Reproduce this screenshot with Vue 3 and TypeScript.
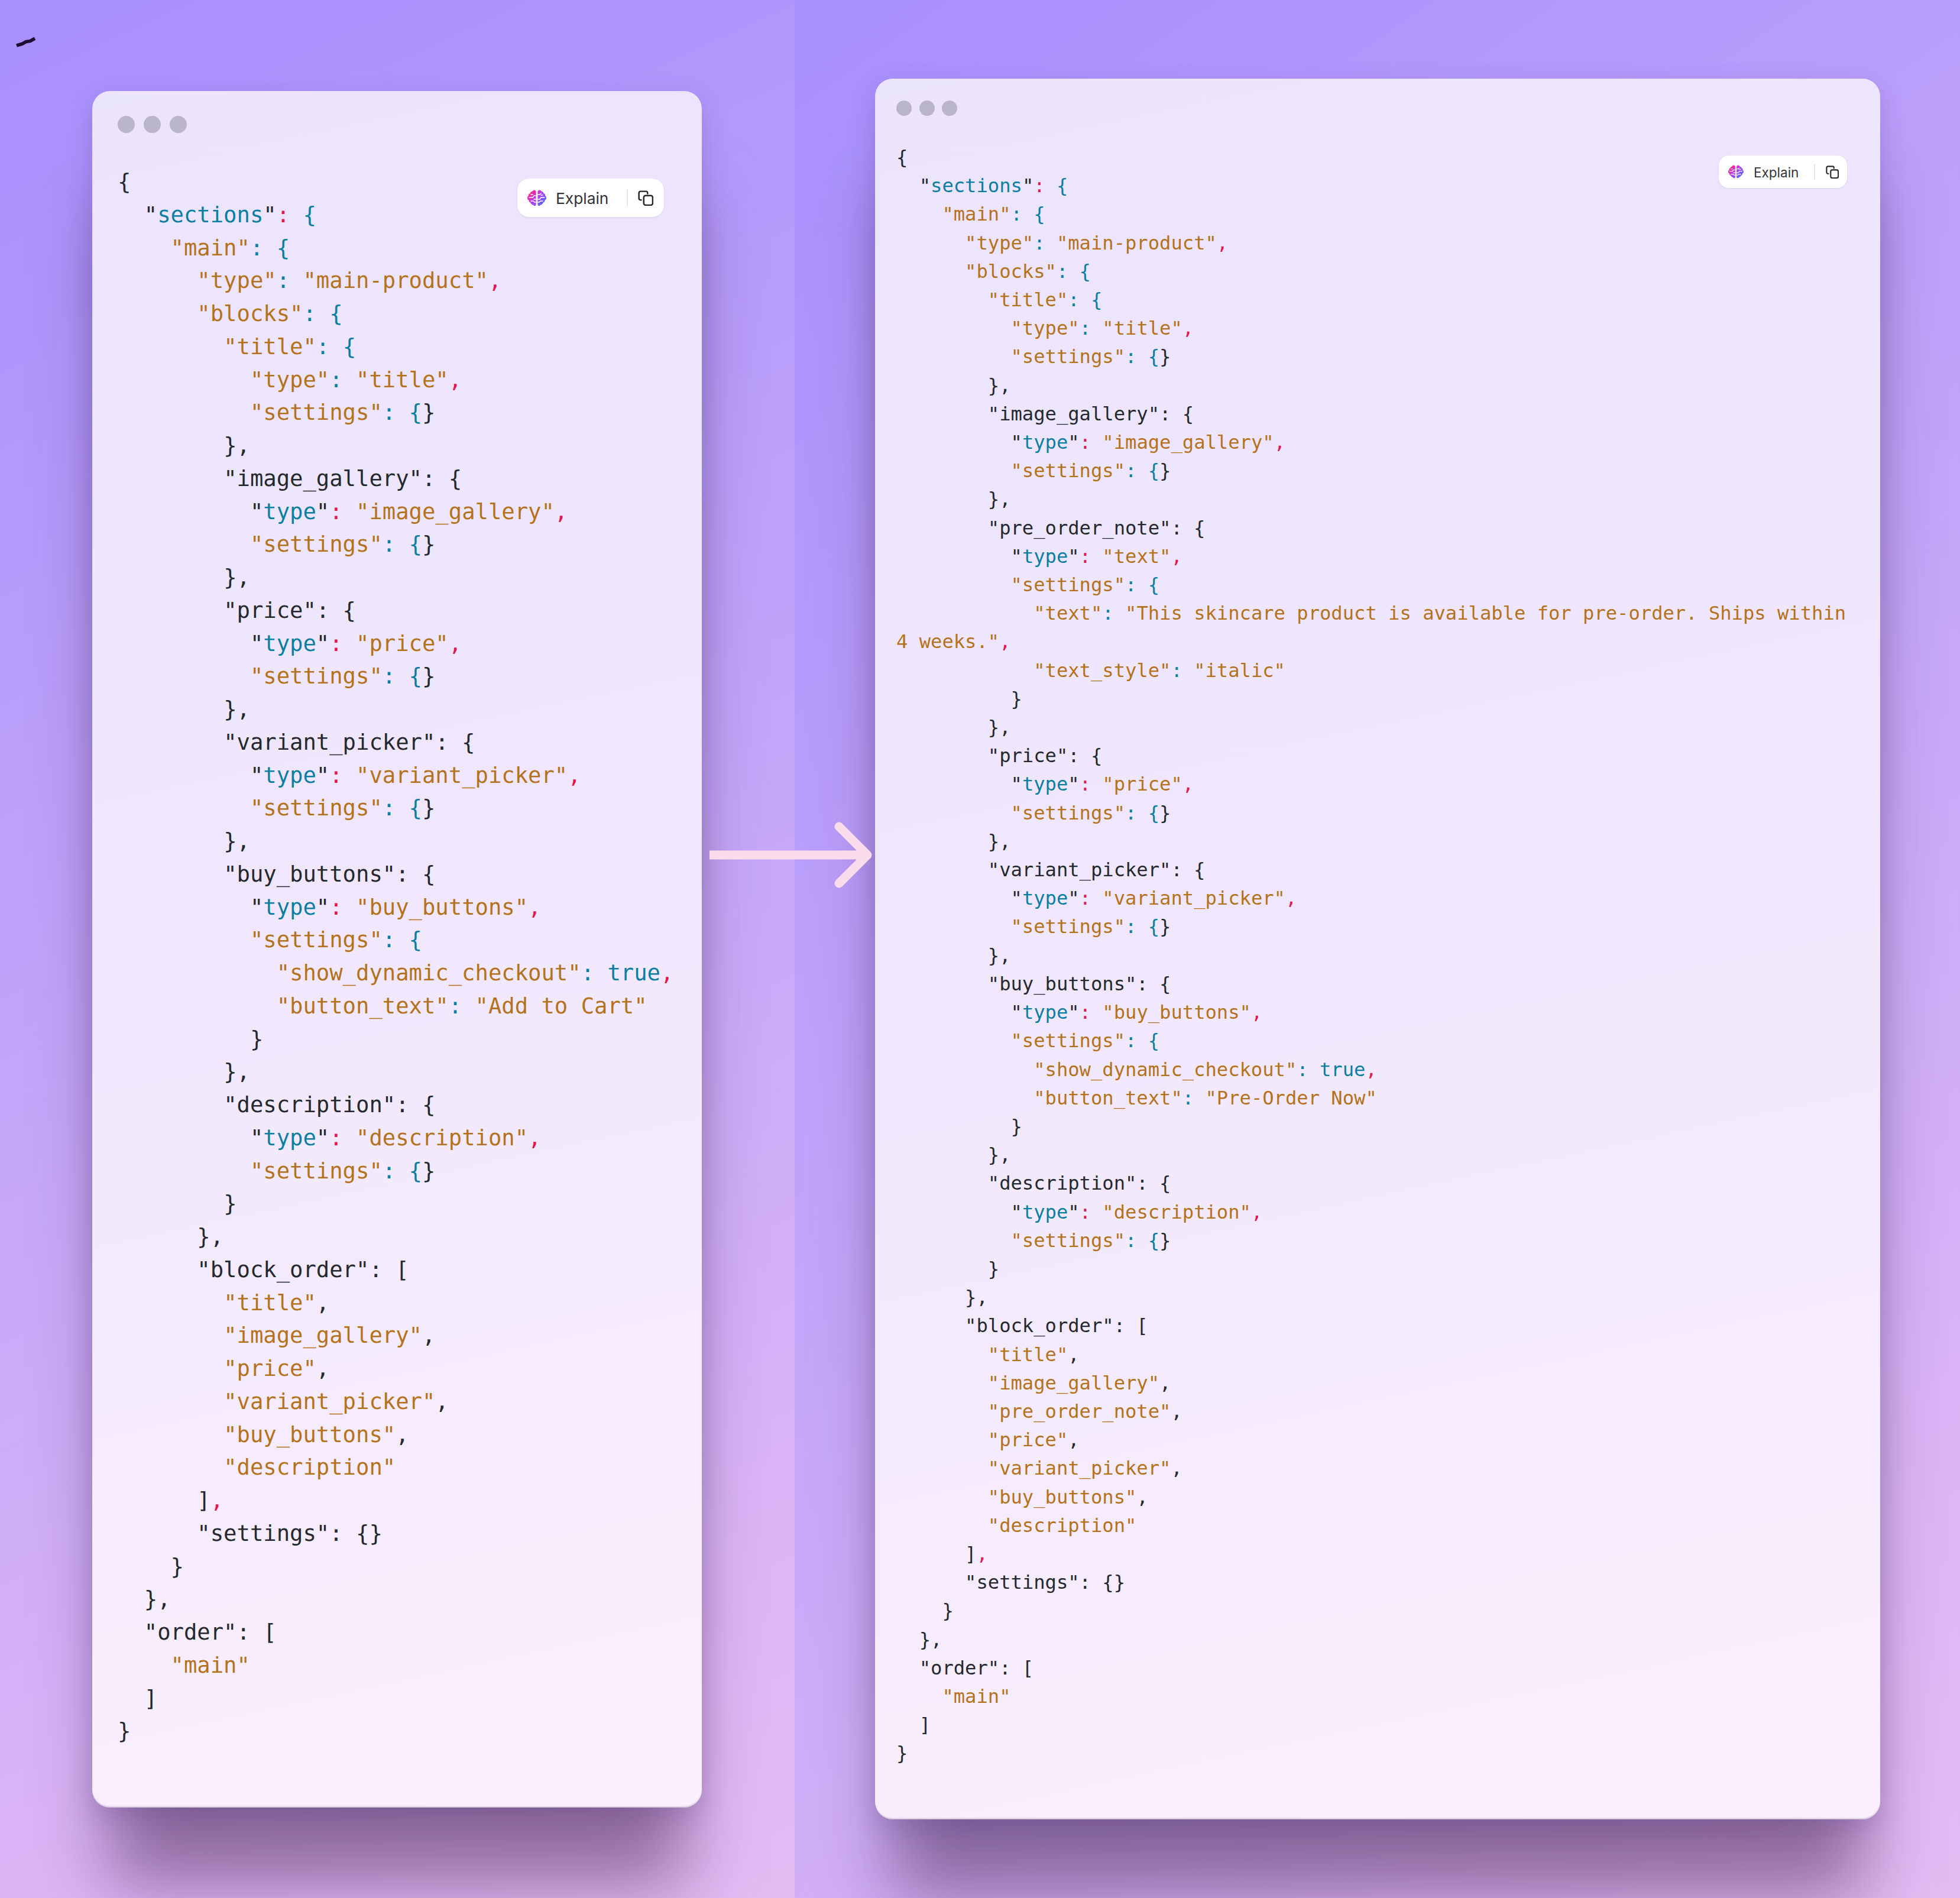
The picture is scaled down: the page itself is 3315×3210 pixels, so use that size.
<script setup lang="ts">
type Token = { c: string; t: string }

const sp = (n: number) => ' '.repeat(n)
const dk = (n: number, s: string) => `~d${sp(n)}${s}`
const keyOpen = (n: number, k: string) => `~d${sp(n)}~o"${k}"~t: {`
const typeOrange = (n: number, v: string) => `~d${sp(n)}~o"type"~t: ~o"${v}"~r,`
const typeTeal = (n: number, v: string) => `~d${sp(n)}"~ttype~d"~r:~d ~o"${v}"~r,`
const settingsEmpty = (n: number) => `~d${sp(n)}~o"settings"~t: {~d}`
const block = (k: string) => [dk(8, `"${k}": {`), typeTeal(10, k), settingsEmpty(10), dk(8, '},')]
const item = (v: string, comma = true) => `~d${sp(8)}~o"${v}"${comma ? '~d,' : ''}`

function buildDoc(withNote: boolean, buttonText: string): string[] {
  const note = withNote
    ? [
        dk(8, '"pre_order_note": {'),
        typeTeal(10, 'text'),
        keyOpen(10, 'settings'),
        `~d${sp(12)}~o"text"~t: ~o"This skincare product is available for pre-order. Ships within 4 weeks."~r,`,
        `~d${sp(12)}~o"text_style"~t: ~o"italic"`,
        dk(10, '}'),
        dk(8, '},')
      ]
    : []
  return [
    '~d{',
    `~d${sp(2)}"~tsections~d"~r:~t {`,
    keyOpen(4, 'main'),
    typeOrange(6, 'main-product'),
    keyOpen(6, 'blocks'),
    keyOpen(8, 'title'),
    typeOrange(10, 'title'),
    settingsEmpty(10),
    dk(8, '},'),
    ...block('image_gallery'),
    ...note,
    ...block('price'),
    ...block('variant_picker'),
    dk(8, '"buy_buttons": {'),
    typeTeal(10, 'buy_buttons'),
    keyOpen(10, 'settings'),
    `~d${sp(12)}~o"show_dynamic_checkout"~t: true~r,`,
    `~d${sp(12)}~o"button_text"~t: ~o"${buttonText}"`,
    dk(10, '}'),
    dk(8, '},'),
    dk(8, '"description": {'),
    typeTeal(10, 'description'),
    settingsEmpty(10),
    dk(8, '}'),
    dk(6, '},'),
    dk(6, '"block_order": ['),
    item('title'),
    item('image_gallery'),
    ...(withNote ? [item('pre_order_note')] : []),
    item('price'),
    item('variant_picker'),
    item('buy_buttons'),
    item('description', false),
    `~d${sp(6)}]~r,`,
    dk(6, '"settings": {}'),
    dk(4, '}'),
    dk(2, '},'),
    dk(2, '"order": ['),
    `~d${sp(4)}~o"main"`,
    dk(2, ']'),
    '~d}'
  ]
}

const tokenize = (line: string): Token[] =>
  line
    .split('~')
    .filter(Boolean)
    .map((seg) => ({ c: seg[0], t: seg.slice(1) }))

const panels = [
  { id: 'left', lines: buildDoc(false, 'Add to Cart').map(tokenize) },
  { id: 'right', lines: buildDoc(true, 'Pre-Order Now').map(tokenize) }
]
</script>

<template>
  <div class="stage">
    <section v-for="p in panels" :key="p.id" class="panel" :class="`panel--${p.id}`">
      <article class="card">
        <div class="dots">
          <span class="dot"></span>
          <span class="dot"></span>
          <span class="dot"></span>
        </div>
        <div class="pill">
          <svg class="brain" viewBox="0 0 32 28" aria-hidden="true">
            <defs>
              <linearGradient :id="`brain-${p.id}`" x1="0" y1="0" x2="1" y2="0.75">
                <stop offset="0" stop-color="#f7a21f" />
                <stop offset="0.24" stop-color="#ee2aa4" />
                <stop offset="0.55" stop-color="#b43ff0" />
                <stop offset="1" stop-color="#4a6cf8" />
              </linearGradient>
            </defs>
            <path
              :fill="`url(#brain-${p.id})`"
              d="M14.6 3.5C14.6 1.5 13 0.4 11.2 0.6 9.8 0.7 8.7 1.6 8.3 2.8 6.3 2.6 4.6 4 4.5 5.9 2.6 6.5 1.5 8.2 1.8 10 0.5 11 -0.2 12.6 0 14.3c.2 1.6 1.2 2.9 2.6 3.5-.2 1.9 1 3.6 2.9 4 .3 2 2 3.5 4 3.5.9 1.6 2.9 2.3 4.3 1.5.6-.3.8-.9.8-1.6zM17.4 3.5C17.4 1.5 19 0.4 20.8 0.6 22.2 0.7 23.3 1.6 23.7 2.8 25.7 2.6 27.4 4 27.5 5.9 29.4 6.5 30.5 8.2 30.2 10c1.3 1 2 2.6 1.8 4.3-.2 1.6-1.2 2.9-2.6 3.5.2 1.9-1 3.6-2.9 4-.3 2-2 3.5-4 3.5-.9 1.6-2.9 2.3-4.3 1.5-.6-.3-.8-.9-.8-1.6z"
            />
            <path
              fill="none"
              stroke="#fff"
              stroke-width="1.4"
              stroke-linecap="round"
              stroke-linejoin="round"
              d="M3 13h6l2-3h3M6 8h3M6 19h4l2 2h2M14 16h-3M18 8h3l2-2M29 13h-6l-2 3h-3M26 9h-3M26 19h-4l-2 2h-2"
            />
          </svg>
          <span class="pill-label">Explain</span>
          <span class="pill-rule"></span>
          <svg
            class="copy"
            viewBox="0 0 24 24"
            fill="none"
            stroke="#26262b"
            stroke-width="2.3"
            stroke-linecap="round"
            stroke-linejoin="round"
            aria-hidden="true"
          >
            <rect x="9" y="8" width="14" height="15" rx="3" />
            <path d="M5 15H4a2.5 2.5 0 0 1-2.5-2.5V4A2.5 2.5 0 0 1 4 1.5h8.5A2.5 2.5 0 0 1 15 4v1" />
          </svg>
        </div>
        <div class="code">
          <div v-for="(line, i) in p.lines" :key="i" class="line"><span
              v-for="(tok, j) in line"
              :key="j"
              :class="`tk-${tok.c}`"
            >{{ tok.t }}</span></div>
        </div>
      </article>
    </section>

    <svg class="scribble" viewBox="0 0 40 20" aria-hidden="true">
      <path d="M4 16 L 14 13 L 20 9.5 L 27 8.5 L 35 4" fill="none" stroke="#1c0d33" stroke-width="5.5" stroke-linecap="butt" stroke-linejoin="round" />
    </svg>

    <svg class="arrow" viewBox="0 0 290 116" aria-hidden="true">
      <path
        d="M0 58H266M219 10l48 48-48 48"
        fill="none"
        stroke="#fbdcec"
        stroke-width="15"
        stroke-linejoin="round"
        stroke-linecap="round"
      />
    </svg>
  </div>
</template>

<style>
html,
body {
  margin: 0;
  padding: 0;
}
</style>

<style scoped>
.stage {
  position: relative;
  display: flex;
  width: 3315px;
  height: 3210px;
  overflow: hidden;
}

.panel {
  box-sizing: border-box;
  height: 100%;
}

.panel--left {
  flex: 0 0 1344px;
  padding: 154px 0 0 156px;
  background: linear-gradient(155deg, #a78ffd 0%, #c4a6f9 50%, #e6bcf4 100%);
}

.panel--right {
  flex: 1 1 0;
  padding: 133px 0 0 136px;
  background: linear-gradient(145deg, #a78ffd 0%, #c4a6f9 50%, #e6bcf4 100%);
}

.card {
  position: relative;
  box-sizing: border-box;
  border-radius: 30px;
  background: linear-gradient(168deg, #ebe4fd 0%, #f0e7fd 45%, #f9effd 100%);
  box-shadow:
    inset 0 -3px 2px -1px rgba(110, 90, 125, 0.25),
    0 14px 44px rgba(60, 35, 110, 0.2),
    0 155px 120px -28px rgba(60, 30, 70, 0.5);
}

.panel--left .card {
  width: 1031px;
  height: 2903px;
  padding: 42px 40px 0 43px;
}

.panel--right .card {
  width: 1700px;
  height: 2944px;
  padding: 37px 36px 0 36px;
}

.dots {
  display: flex;
}

.dot {
  border-radius: 50%;
  background: #bab5c9;
}

.panel--left .dots {
  gap: 15px;
}

.panel--left .dot {
  width: 29px;
  height: 29px;
}

.panel--right .dots {
  gap: 12.5px;
}

.panel--right .dot {
  width: 26px;
  height: 26px;
}

.pill {
  position: absolute;
  display: flex;
  align-items: center;
  box-sizing: border-box;
  background: #fff;
  box-shadow: 0 1px 3px rgba(90, 70, 120, 0.12);
  font-family: Inter, "Liberation Sans", sans-serif;
  color: #33333a;
}

.panel--left .pill {
  top: 148px;
  right: 64px;
  width: 248px;
  height: 65px;
  padding: 0 17px;
  border-radius: 20px;
}

.panel--right .pill {
  top: 130px;
  right: 56px;
  width: 217px;
  height: 55px;
  padding: 0 14px 0 16px;
  border-radius: 17px;
}

.brain,
.copy,
.pill-rule {
  flex: none;
}

.pill-label {
  padding-top: 2px;
  white-space: nowrap;
}

.pill-rule {
  width: 2px;
  background: #e4e4ea;
}

.panel--left .brain {
  width: 32px;
  height: 28px;
}

.panel--left .pill-label {
  width: 88px;
  margin-left: 16px;
  font-size: 26.3px;
}

.panel--left .pill-rule {
  height: 29px;
  margin: 0 17px 0 32px;
}

.panel--left .copy {
  width: 26px;
  height: 26px;
}

.panel--right .brain {
  width: 26px;
  height: 25px;
}

.panel--right .pill-label {
  width: 77px;
  margin-left: 17px;
  font-size: 22.5px;
}

.panel--right .pill-rule {
  height: 26px;
  margin: 0 18px 0 26px;
}

.panel--right .copy {
  width: 22px;
  height: 22px;
}

.code {
  font-family: "DejaVu Sans Mono", "Liberation Mono", monospace;
  color: #24292e;
}

.panel--left .code {
  margin-top: 55px;
  font-size: 37.2px;
  line-height: 55.75px;
}

.panel--right .code {
  margin-top: 46px;
  font-size: 32.15px;
  line-height: 48.2px;
}

.line {
  white-space: pre-wrap;
}

.tk-d {
  color: #24292e;
}

.tk-o {
  color: #b5721c;
}

.tk-t {
  color: #0b7f9f;
}

.tk-r {
  color: #e0184f;
}

.scribble {
  position: absolute;
  top: 61px;
  left: 24px;
  width: 40px;
  height: 20px;
}

.arrow {
  position: absolute;
  top: 1388px;
  left: 1200px;
  width: 290px;
  height: 116px;
}
</style>
